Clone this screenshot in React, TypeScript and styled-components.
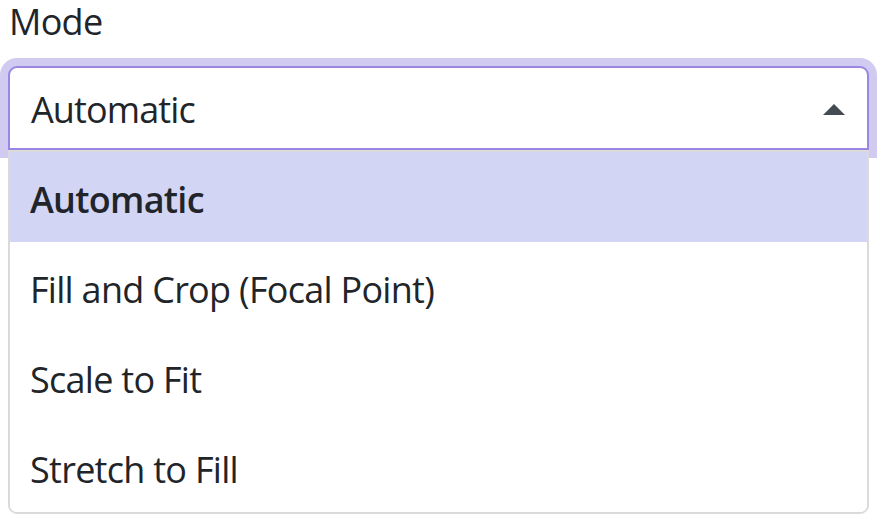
import React from "react";
import styled, { createGlobalStyle } from "styled-components";

const Global = createGlobalStyle`
  html, body { margin: 0; padding: 0; background: #ffffff; }
  body {
    font-family: "Open Sans", "Noto Sans", sans-serif;
    color: #212529;
    -webkit-font-smoothing: antialiased;
  }
`;

const Page = styled.div`
  width: 879px;
  height: 521px;
  overflow: hidden;
  padding: 0 10px 0 8px;
  box-sizing: border-box;
`;

const Label = styled.label`
  display: block;
  font-size: 36px;
  line-height: 38px;
  padding: 3px 0 0 1px;
  margin-bottom: 25px;
  letter-spacing: -0.02em;
`;

const SelectWrap = styled.div`
  position: relative;
`;

const SelectBox = styled.div`
  height: 84px;
  box-sizing: border-box;
  border: 2px solid #9b87e3;
  border-radius: 9px 9px 0 0;
  box-shadow: 0 0 0 8px #d2cbf1;
  background: #fff;
  display: flex;
  align-items: center;
  justify-content: space-between;
  padding: 2px 22px 0 21px;
  font-size: 36px;
  letter-spacing: -0.025em;
`;

const Caret = styled.svg`
  width: 22px;
  height: 11px;
  flex: none;
  margin-top: 1px;
`;

const Menu = styled.ul`
  position: absolute;
  top: 100%;
  left: 0;
  right: 0;
  margin: 0;
  padding: 0;
  list-style: none;
  background: #fff;
  border: 2px solid #dadada;
  border-radius: 0 0 9px 9px;
  overflow: hidden;
  z-index: 2;
`;

const Item = styled.li<{ $active?: boolean }>`
  height: 90px;
  box-sizing: border-box;
  display: flex;
  align-items: center;
  padding: 5px 20px 0 20px;
  font-size: 36px;
  letter-spacing: -0.02em;
  font-weight: ${(p) => (p.$active ? 600 : 400)};
  background: ${(p) => (p.$active ? "#d3d5f5" : "#fff")};
  color: #212529;
`;

const options = ["Automatic", "Fill and Crop (Focal Point)", "Scale to Fit", "Stretch to Fill"];

export default function App() {
  return (
    <Page>
      <Global />
      <Label>Mode</Label>
      <SelectWrap>
        <SelectBox>
          <span>Automatic</span>
          <Caret viewBox="0 0 22 11">
            <polygon points="0,11 11,0 22,11" fill="#454b52" />
          </Caret>
        </SelectBox>
        <Menu>
          {options.map((o, i) => (
            <Item key={o} $active={i === 0}>
              {o}
            </Item>
          ))}
        </Menu>
      </SelectWrap>
    </Page>
  );
}
